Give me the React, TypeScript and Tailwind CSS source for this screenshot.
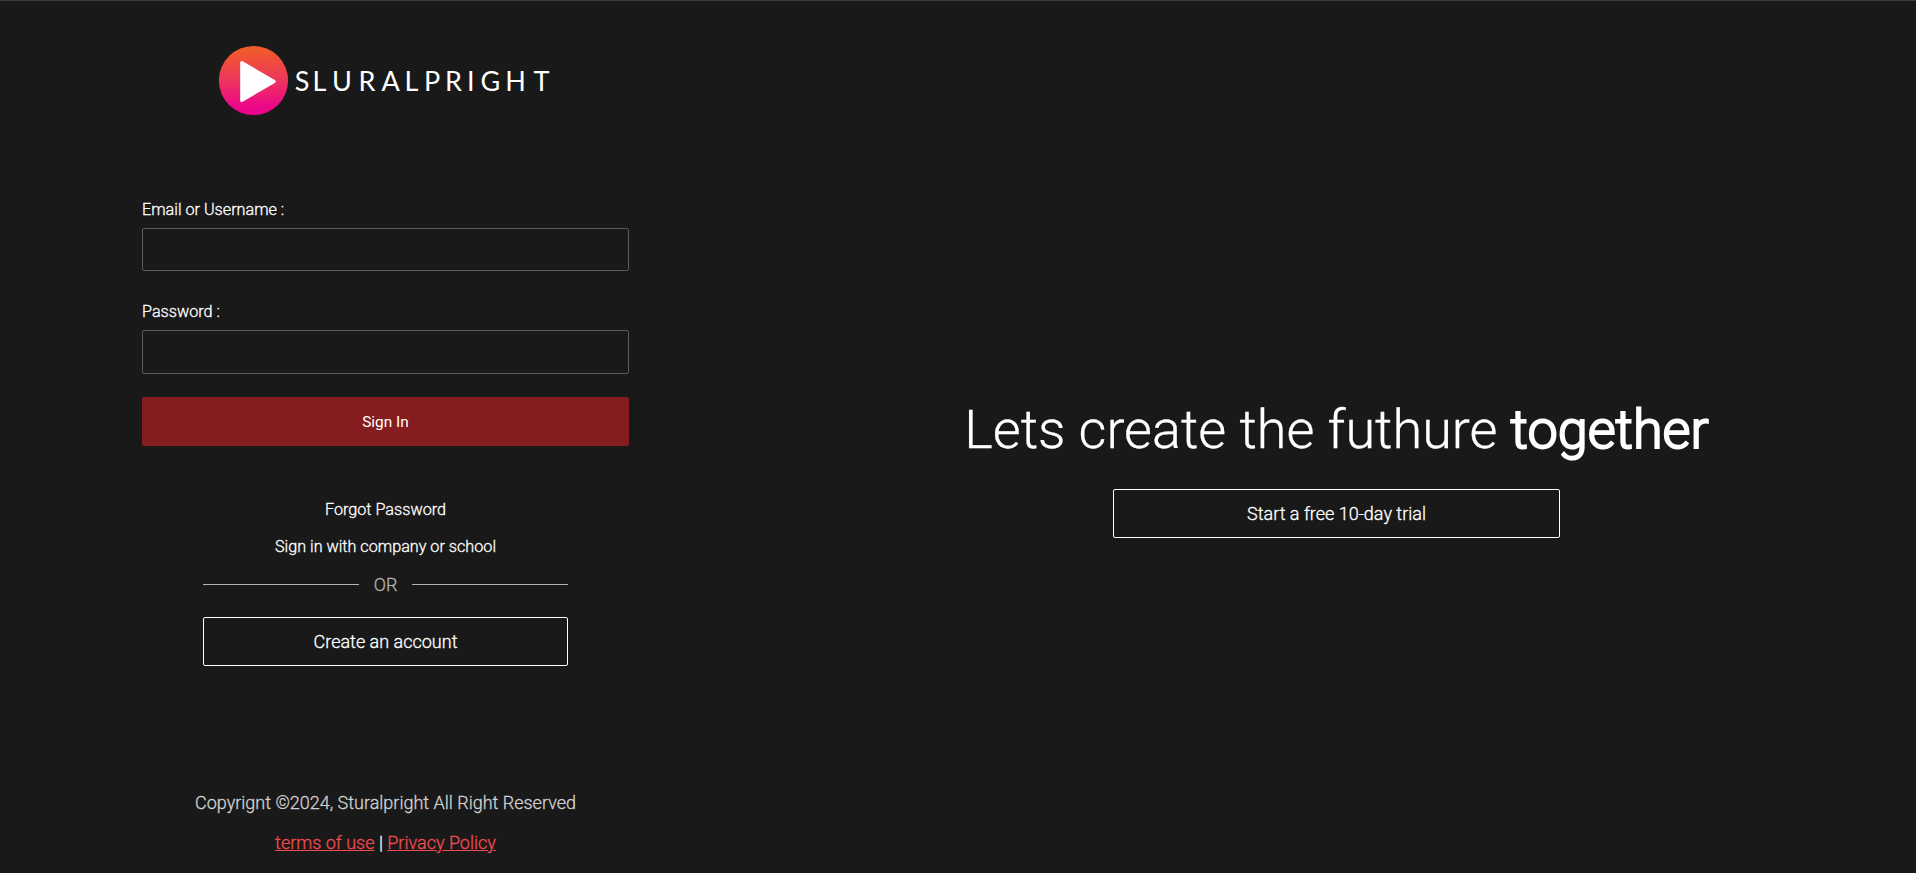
import React from "react";

function Logo() {
  return (
    <svg width="336" height="72" viewBox="0 0 336 72" aria-label="Sluralpright">
      <defs>
        <linearGradient id="disc" x1="0" y1="0" x2="0" y2="1">
          <stop offset="0.05" stopColor="#f15b2a" />
          <stop offset="0.45" stopColor="#ee3a57" />
          <stop offset="0.85" stopColor="#ec0a86" />
          <stop offset="1" stopColor="#ec008c" />
        </linearGradient>
      </defs>
      <circle cx="35.5" cy="35.5" r="34.6" fill="url(#disc)" />
      <path d="M23.8 17.6 56 36.5 23.8 55.4Z" fill="#fff" stroke="#fff" strokeWidth="3.2" strokeLinejoin="round" />
      <text
        y="45.7"
        x="76.8 94.5 114 140.5 163.5 186.6 205.9 226.9 249.1 262.6 287.2 315.4"
        fill="#fff"
        className="font-['Lato',sans-serif] text-[27px] font-normal [-webkit-text-stroke:0]"
      >
        SLURALPRIGHT
      </text>
    </svg>
  );
}

function Field({ id, label, type, className }: { id: string; label: string; type: string; className: string }) {
  return (
    <div className="flex flex-col">
      <label htmlFor={id} className="mb-2 h-5 text-[16.2px] leading-5 text-white">
        {label}
      </label>
      <input id={id} type={type} className={`w-full rounded-xs border border-[#5a5a5a] bg-transparent px-3 text-white ${className}`} />
    </div>
  );
}

export default function App() {
  return (
    <div className="flex h-[873px] w-full overflow-hidden border-t border-[#3c3c3c] bg-[#191919] font-['Roboto',sans-serif] font-light text-white [-webkit-text-stroke:0.3px_currentColor]">
      <section className="flex w-[771px] shrink-0 flex-col items-center">
        <div className="mt-11 h-[72px] w-[335px]">
          <Logo />
        </div>
        <form className="mt-[83px] flex w-[487px] flex-col">
          <Field id="user" label="Email or Username :" type="text" className="h-[43px]" />
          <div className="mt-[31px]">
            <Field id="password" label="Password :" type="password" className="h-11" />
          </div>
          <button type="button" className="mt-[23px] h-[49px] rounded-xs bg-[#851c1f] pt-0.5 text-[15.4px] font-normal [-webkit-text-stroke:0]">
            Sign In
          </button>
        </form>
        <a className="mt-[54px] text-[16.2px] leading-5">Forgot Password</a>
        <a className="mt-[17px] text-[16.2px] leading-5">Sign in with company or school</a>
        <div className="mt-[15px] flex h-6 w-[365px] items-center justify-between text-lg leading-6 text-[#b4b4b4]">
          <span className="h-px w-[156px] bg-[#b4b4b4]" />
          <span className="pt-px">OR</span>
          <span className="h-px w-[156px] bg-[#b4b4b4]" />
        </div>
        <button type="button" className="mt-[21px] h-[49px] w-[365px] rounded-xs border border-white text-lg font-light">
          Create an account
        </button>
        <footer className="mt-[125px] flex flex-col items-center text-lg leading-6">
          <p className="text-[#d0d0d0]">Copyrignt ©2024, Sturalpright All Right Reserved</p>
          <p className="mt-4">
            <a className="text-[#f04a50] underline">terms of use</a> | <a className="text-[#f04a50] underline">Privacy Policy</a>
          </p>
        </footer>
      </section>
      <section className="flex w-[1131px] flex-col items-center">
        <h1 className="mt-[393px] text-[54px] leading-[72px] whitespace-nowrap">
          Lets create the futhure <span className="[-webkit-text-stroke:2px_white]">together</span>
        </h1>
        <button type="button" className="mt-[23px] h-[49px] w-[447px] rounded-xs border border-white text-lg font-light">
          Start a free 10-day trial
        </button>
      </section>
    </div>
  );
}
